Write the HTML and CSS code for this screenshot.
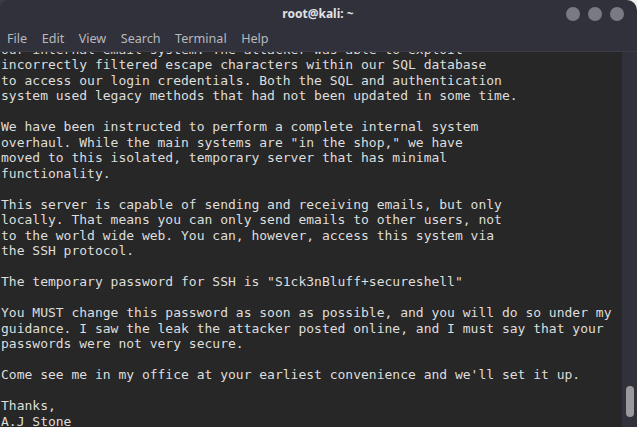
FILE: index.html
```html
<!DOCTYPE html>
<html>
<head>
<meta charset="utf-8">
<title>root@kali: ~</title>
<link rel="stylesheet" href="styles.css">
</head>
<body>
<div class="window">
  <header class="titlebar">
    <div class="title">root@kali: ~</div>
    <div class="controls">
      <span class="dot"></span><span class="dot"></span><span class="dot"></span>
    </div>
  </header>
  <nav class="menubar">
    <span class="menu-item">File</span>
    <span class="menu-item">Edit</span>
    <span class="menu-item">View</span>
    <span class="menu-item">Search</span>
    <span class="menu-item">Terminal</span>
    <span class="menu-item">Help</span>
  </nav>
  <main class="body">
    <div class="terminal">
<pre class="output">our internal email system. The attacker was able to exploit
incorrectly filtered escape characters within our SQL database
to access our login credentials. Both the SQL and authentication
system used legacy methods that had not been updated in some time.

We have been instructed to perform a complete internal system
overhaul. While the main systems are "in the shop," we have
moved to this isolated, temporary server that has minimal
functionality.

This server is capable of sending and receiving emails, but only
locally. That means you can only send emails to other users, not
to the world wide web. You can, however, access this system via
the SSH protocol.

The temporary password for SSH is "S1ck3nBluff+secureshell"

You MUST change this password as soon as possible, and you will do so under my
guidance. I saw the leak the attacker posted online, and I must say that your
passwords were not very secure.

Come see me in my office at your earliest convenience and we'll set it up.

Thanks,
A.J Stone
</pre>
    </div>
    <div class="scrollbar"><div class="thumb"></div></div>
  </main>
</div>
</body>
</html>
```

FILE: styles.css
```css
html, body {
  margin: 0;
  padding: 0;
  height: 100%;
}
body {
  background: linear-gradient(to right, #3b3c45 50%, #ececec 50%);
  overflow: hidden;
}
.window {
  height: 427px;
  display: flex;
  flex-direction: column;
  background: #30313b;
  border-radius: 8px 10px 0 0;
  overflow: hidden;
}
.titlebar {
  height: 26px;
  flex: none;
  display: flex;
  align-items: center;
  justify-content: center;
  position: relative;
}
.title {
  font-family: "Noto Sans", "DejaVu Sans", sans-serif;
  font-weight: bold;
  font-size: 12px;
  color: #e2e2e4;
  margin-left: -1px;
  margin-top: 1px;
}
.controls {
  position: absolute;
  right: 13px;
  top: 7px;
  display: flex;
  gap: 8px;
}
.dot {
  width: 14px;
  height: 14px;
  border-radius: 50%;
  background: #7a7a82;
}
.menubar {
  height: 25px;
  flex: none;
  display: flex;
  align-items: center;
  padding-left: 7px;
  gap: 14.5px;
  border-bottom: 1px solid #3c3d47;
  font-family: "Noto Sans", "DejaVu Sans", sans-serif;
  font-size: 12.6px;
  color: #b9b9bd;
}
.menu-item {
  line-height: 18px;
  margin-top: 1px;
}
.body {
  flex: 1;
  display: flex;
  min-height: 0;
}
.terminal {
  flex: 1;
  background: #272727;
  overflow: hidden;
}
.output {
  margin: -10.5px 0 0 1px;
  font-family: "DejaVu Sans Mono", monospace;
  font-size: 13px;
  line-height: 15.5px;
  color: #dedede;
}
.scrollbar {
  width: 15px;
  flex: none;
  background: #30313b;
  display: flex;
  flex-direction: column;
  justify-content: flex-end;
  align-items: center;
}
.thumb {
  width: 8px;
  height: 31px;
  margin-bottom: 10px;
  margin-left: 1px;
  border-radius: 4px;
  background: #9a9a9e;
}
```
